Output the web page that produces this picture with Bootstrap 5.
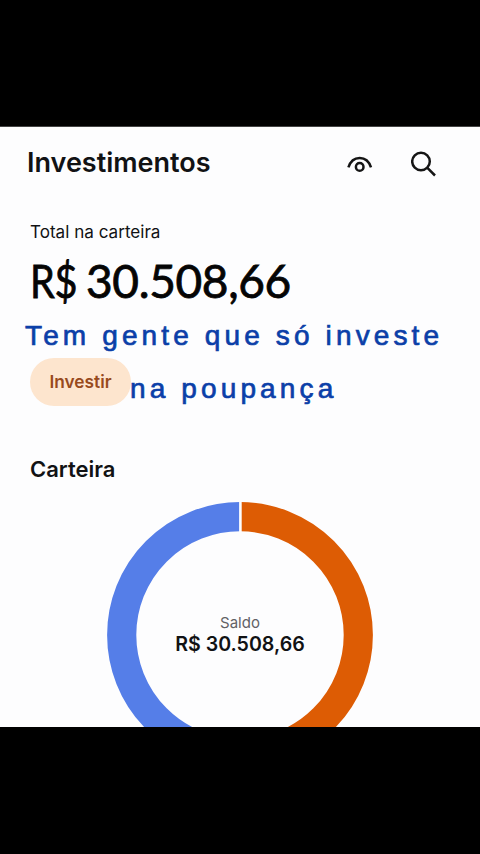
<!DOCTYPE html>
<html lang="pt-BR">
<head>
<meta charset="utf-8">
<meta name="viewport" content="width=device-width, initial-scale=1">
<title>Investimentos</title>
<link href="https://cdn.jsdelivr.net/npm/bootstrap@5.3.0/dist/css/bootstrap.min.css" rel="stylesheet">
<style>
  body { font-family: Inter, "Liberation Sans", sans-serif; color: #111214; line-height: 1; }
  .stage { width: 480px; height: 854px; padding: 126px 0 127px; background: #000; }
  .panel { height: 601px; background: #fdfdfe; border-top: 1px solid #444; }
  .topbar { height: 72px; padding: 0 43px 0 27px; }
  .page-title { font-size: 27px; font-weight: 600; letter-spacing: 0; }
  .actions { gap: 38px; padding-top: 2px; }
  .total { padding: 23px 30px 0; }
  .total-label { font-size: 17.1px; line-height: 20px; }
  .total-value { font-family: Lato, sans-serif; font-size: 46px; line-height: 54px; letter-spacing: -.35px; color: #050505; -webkit-text-stroke: .8px #050505; margin-top: 12px; }
  .currency { width: 56px; transform: scaleX(.86); transform-origin: left; }
  .invest { width: 101px; height: 48px; margin-top: 49.5px; padding: 0; border: 0; background: #fde5ce; color: #984a1c; font-size: 17.3px; line-height: 20px; font-weight: 600; }
  .wallet-title { font-size: 22px; line-height: 26px; font-weight: 600; margin: 50px 30px 0; }
  .donut { width: 266px; height: 266px; margin: 20px 0 0 107px; }
  .balance-label { font-size: 15px; line-height: 18px; color: #626266; }
  .balance-value { font-size: 19.6px; line-height: 24px; font-weight: 600; }
  .caption { position: absolute; left: 25px; top: 309px; width: 440px; font-family: "Liberation Sans", sans-serif; font-size: 28px; line-height: 53px; letter-spacing: 4.13px; color: #0b3fa8; -webkit-text-stroke: .7px #0b3fa8; }
  .caption-end { padding-left: 105px; }
</style>
</head>
<body>
<main class="stage position-relative overflow-hidden">
  <section class="panel overflow-hidden">
    <header class="topbar d-flex align-items-center justify-content-between">
      <h1 class="page-title mb-0">Investimentos</h1>
      <div class="actions d-flex align-items-center">
        <svg width="26" height="26" viewBox="0 0 26 26" fill="none" stroke="#151515" stroke-width="2.5" aria-label="Ocultar valores"><path d="M1.4 16.4C5.4 3.8 20 3.8 24 16.4"/><circle cx="12.7" cy="15.9" r="3.8"/></svg>
        <svg width="26" height="26" viewBox="0 0 26 26" fill="none" stroke="#151515" stroke-width="2.5" aria-label="Buscar"><circle cx="10" cy="10.5" r="8.8"/><path d="M16.4 16.9L24 24.5"/></svg>
      </div>
    </header>
    <div class="total">
      <div class="total-label">Total na carteira</div>
      <div class="total-value"><span class="currency d-inline-block">R$</span><span>30.508,66</span></div>
      <button class="invest btn rounded-pill d-flex align-items-center justify-content-center" type="button">Investir</button>
    </div>
    <h2 class="wallet-title">Carteira</h2>
    <div class="donut position-relative d-flex flex-column align-items-center justify-content-center">
      <svg class="position-absolute top-0 start-0" width="266" height="266" viewBox="0 0 266 266" fill="none" stroke-width="29.2"><path stroke="#dd5c04" d="M133 14.7A118.3 118.3 0 0 1 133 251.3"/><path stroke="#557ee8" d="M133 251.3A118.3 118.3 0 0 1 133 14.7"/><path stroke="#fdfdfe" stroke-width="2.6" d="M133.4 0V30"/></svg>
      <span class="balance-label position-relative">Saldo</span>
      <span class="balance-value position-relative">R$ 30.508,66</span>
    </div>
  </section>
  <div class="caption text-nowrap"><div><span>Tem gente que só investe</span></div><div class="caption-end"><span>na poupança</span></div></div>
</main>
<script src="https://cdn.jsdelivr.net/npm/bootstrap@5.3.0/dist/js/bootstrap.bundle.min.js"></script>
</body>
</html>
